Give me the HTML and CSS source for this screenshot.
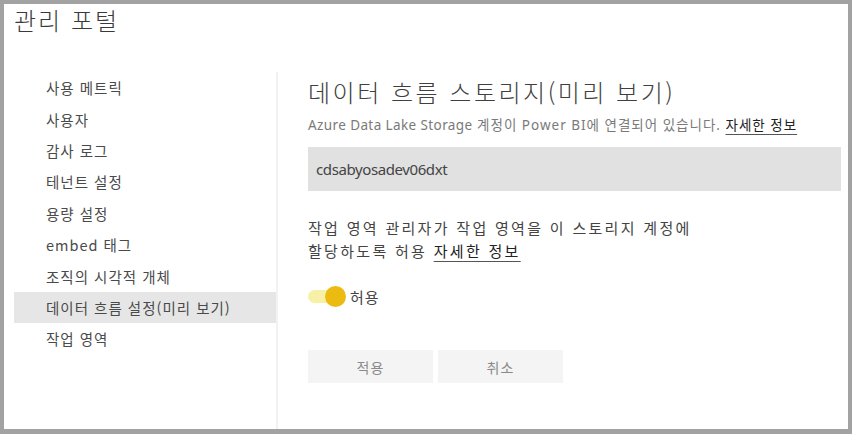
FILE: index.html
```html
<!DOCTYPE html>
<html lang="ko">
<head>
<meta charset="utf-8">
<link rel="stylesheet" href="styles.css">
</head>
<body>
<div class="frame">
  <header class="header"><h1 class="title">관리 포털</h1></header>
  <div class="main">
    <nav class="sidebar">
      <div class="item">사용 메트릭</div>
      <div class="item">사용자</div>
      <div class="item">감사 로그</div>
      <div class="item">테넌트 설정</div>
      <div class="item">용량 설정</div>
      <div class="item">embed 태그</div>
      <div class="item">조직의 시각적 개체</div>
      <div class="item selected">데이터 흐름 설정(미리 보기)</div>
      <div class="item">작업 영역</div>
    </nav>
    <section class="content">
      <h2 class="heading">데이터 흐름 스토리지(미리 보기)</h2>
      <p class="subtitle"><span class="latin">Azure Data Lake Storage</span> 계정이 Power BI에 연결되어 있습니다. <a class="link">자세한 정보</a></p>
      <div class="input">cdsabyosadev06dxt</div>
      <p class="para">작업 영역 관리자가 작업 영역을 이 스토리지 계정에<br>할당하도록 허용 <a class="link">자세한 정보</a></p>
      <div class="toggle-row">
        <span class="toggle"><span class="track"></span><span class="knob"></span></span>
        <span class="toggle-label">허용</span>
      </div>
      <div class="buttons">
        <button class="btn">적용</button>
        <button class="btn">취소</button>
      </div>
    </section>
  </div>
</div>
</body>
</html>
```
FILE: styles.css
```css
* { box-sizing: border-box; }
html, body { margin: 0; padding: 0; }
body {
  width: 852px;
  height: 434px;
  overflow: hidden;
  background: #a2a2a2;
  font-family: "Noto Sans", "Noto Sans CJK KR", sans-serif;
}
.frame {
  width: 852px;
  height: 434px;
  border-style: solid;
  border-color: #a2a2a2;
  border-width: 4px 4px 5px 4px;
  background: #fff;
  display: flex;
  flex-direction: column;
}
.header {
  height: 68px;
  padding-left: 10px;
  flex: none;
}
.title {
  margin: 0;
  font-family: "Noto Sans CJK KR", sans-serif;
  font-weight: 300;
  font-size: 24px;
  line-height: 32px;
  letter-spacing: 2px;
  color: #3a3a3a;
}
.main {
  flex: 1;
  display: flex;
}
.sidebar {
  width: 264px;
  margin-left: 10px;
  border-right: 2px solid #f2f2f2;
  flex: none;
  padding-top: 0.3px;
}
.item {
  height: 31.4px;
  line-height: 31.4px;
  padding-left: 32px;
  font-family: "Noto Sans CJK KR", sans-serif;
  font-size: 14.5px;
  letter-spacing: 1px;
  color: #4a4a4a;
  white-space: nowrap;
}
.item.selected {
  background: #e6e6e6;
}
.content {
  padding-left: 30px;
  padding-right: 7px;
  flex: 1;
  display: flex;
  flex-direction: column;
}
.heading {
  margin: 4px 0 0;
  font-family: "Noto Sans CJK KR", sans-serif;
  font-weight: 300;
  font-size: 24px;
  line-height: 32px;
  letter-spacing: 2.5px;
  color: #404040;
}
.subtitle {
  margin: 7px 0 0;
  font-size: 13.5px;
  line-height: 20px;
  letter-spacing: 1px;
  color: #7a7a7a;
  white-space: nowrap;
}
.latin {
  letter-spacing: 0.4px;
}
.link {
  color: #222;
  text-decoration: underline;
  text-decoration-color: #555;
  text-underline-offset: 4px;
}
.input {
  margin-top: 12px;
  height: 44px;
  background: #e1e1e1;
  padding-left: 8px;
  line-height: 44px;
  font-size: 15px;
  letter-spacing: -0.4px;
  color: #444;
}
.para {
  margin: 25px 0 0;
  font-family: "Noto Sans CJK KR", sans-serif;
  font-size: 15px;
  line-height: 23px;
  letter-spacing: 2.3px;
  color: #444;
}
.toggle-row {
  margin-top: 24px;
  height: 20px;
  display: flex;
  align-items: center;
}
.toggle {
  position: relative;
  width: 38px;
  height: 20px;
  flex: none;
}
.track {
  position: absolute;
  left: 0;
  top: 4px;
  width: 30px;
  height: 13px;
  border-radius: 7px;
  background: #f7f0a6;
}
.knob {
  position: absolute;
  left: 17px;
  top: 0;
  width: 21px;
  height: 21px;
  border-radius: 50%;
  background: #ebbb12;
}
.toggle-label {
  margin-left: 4px;
  font-family: "Noto Sans CJK KR", sans-serif;
  font-size: 15px;
  letter-spacing: 1px;
  color: #444;
}
.buttons {
  margin-top: 44px;
  display: flex;
  gap: 5px;
}
.btn {
  width: 125px;
  height: 33px;
  border: none;
  background: #f4f4f4;
  font-family: "Noto Sans CJK KR", sans-serif;
  font-size: 14px;
  letter-spacing: 1px;
  color: #8a8a8a;
  padding: 0;
}
```
